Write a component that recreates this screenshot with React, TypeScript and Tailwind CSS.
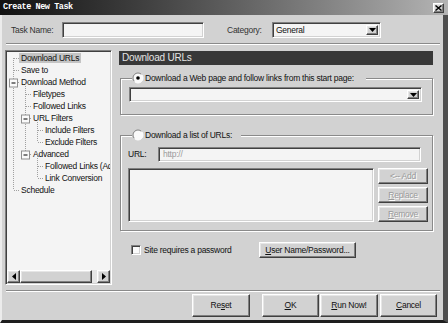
import React from 'react';

const raised =
  'border border-t-white border-l-white border-r-[#404040] border-b-[#404040] shadow-[inset_-1px_-1px_0_#808080,inset_1px_1px_0_#e6e6e6] bg-[#d2d2d2]';
const sunken =
  'border border-t-[#808080] border-l-[#808080] border-r-white border-b-white shadow-[inset_1px_1px_0_#404040,inset_-1px_-1px_0_#d2d2d2]';
const etchedLine = 'h-[2px] border-t border-t-[#8a8a8a] border-b border-b-white';
const groupBox = 'relative border border-[#8a8a8a] shadow-[1px_1px_0_#fff,inset_1px_1px_0_#fff]';

const tree = [
  { t: 'Download URLs', l: 0, sel: true },
  { t: 'Save to', l: 0 },
  { t: 'Download Method', l: 0 },
  { t: 'Filetypes', l: 1 },
  { t: 'Followed Links', l: 1 },
  { t: 'URL Filters', l: 1 },
  { t: 'Include Filters', l: 2 },
  { t: 'Exclude Filters', l: 2 },
  { t: 'Advanced', l: 1 },
  { t: 'Followed Links (Advanced)', l: 2 },
  { t: 'Link Conversion', l: 2 },
  { t: 'Schedule', l: 0 },
];
const indent = ['pl-[12px]', 'pl-[24px]', 'pl-[36px]'];

function DownArrow() {
  return (
    <div className={`${raised} flex h-full w-[12px] items-center justify-center`}>
      <svg width="7" height="4" viewBox="0 0 7 4">
        <polygon points="0,0 7,0 3.5,4" fill="#000" />
      </svg>
    </div>
  );
}

function Radio({ checked }: { checked?: boolean }) {
  return (
    <svg width="12" height="12" viewBox="0 0 12 12" className="shrink-0">
      <circle cx="6" cy="6" r="5" fill="#fafafa" />
      <path d="M2.46 9.54 A5 5 0 0 1 9.54 2.46" stroke="#808080" fill="none" />
      <path d="M9.54 2.46 A5 5 0 0 1 2.46 9.54" stroke="#ffffff" fill="none" />
      {checked && <circle cx="6" cy="6" r="1.8" fill="#000" />}
    </svg>
  );
}

function Btn({ children, className, disabled }: { children: React.ReactNode; className: string; disabled?: boolean }) {
  return (
    <div
      className={`${raised} ${className} flex items-center justify-center ${
        disabled ? 'text-[#9a9a9a] [text-shadow:1px_1px_0_#fff]' : 'text-[#111]'
      }`}
    >
      {children}
    </div>
  );
}

function TreeLines() {
  const c = (i: number) => 6 + 12 * i;
  const h = (x: number, i: number) => <line key={`h${x}-${i}`} x1={x} y1={c(i) + 0.5} x2={x + 6} y2={c(i) + 0.5} />;
  const box = (x: number, i: number) => (
    <g key={`b${x}-${i}`}>
      <rect x={x - 3.5} y={c(i) - 3} width="8" height="8" fill="#fafafa" stroke="#909090" />
      <line x1={x - 1.5} y1={c(i) + 1} x2={x + 2.5} y2={c(i) + 1} stroke="#000" />
    </g>
  );
  return (
    <svg className="pointer-events-none absolute left-0 top-0" width="110" height="150">
      <g stroke="#a0a0a0" strokeDasharray="1 1" fill="none">
        <line x1="6.5" y1={c(0)} x2="6.5" y2={c(11)} />
        <line x1="18.5" y1={c(2)} x2="18.5" y2={c(8)} />
        <line x1="30.5" y1={c(5)} x2="30.5" y2={c(7)} />
        <line x1="30.5" y1={c(8)} x2="30.5" y2={c(10)} />
        {[0, 1, 2, 11].map((i) => h(7, i))}
        {[3, 4, 5, 8].map((i) => h(19, i))}
        {[6, 7, 9, 10].map((i) => h(31, i))}
      </g>
      {box(6, 2)}
      {box(18, 5)}
      {box(18, 8)}
    </svg>
  );
}

function Arrow({ dir }: { dir: 'l' | 'r' }) {
  return (
    <div className={`${raised} flex h-full w-[13px] shrink-0 items-center justify-center`}>
      <svg width="4" height="7" viewBox="0 0 4 7">
        <polygon points={dir === 'l' ? '4,0 4,7 0,3.5' : '0,0 0,7 4,3.5'} fill="#000" />
      </svg>
    </div>
  );
}

export default function App() {
  return (
    <div className="flex h-[323px] w-[448px] flex-col bg-[#d2d2d2] font-['Liberation_Sans',Arial,sans-serif] text-[8.5px] tracking-[-0.25px] text-[#111]">
      {/* title bar */}
      <div className="flex h-[15px] shrink-0 items-center bg-linear-to-r from-[#121212] to-[#b4b4b4] pl-[3px]">
        <span className="font-['Liberation_Mono',monospace] text-[8.5px] font-bold tracking-[-0.45px] text-white">
          Create New Task
        </span>
        <div className={`${raised} ml-auto mr-[4px] flex h-[10px] w-[11px] items-center justify-center`}>
          <svg width="7" height="6" viewBox="0 0 7 6">
            <path d="M0.5 0.5 L6.5 5.5 M6.5 0.5 L0.5 5.5" stroke="#000" strokeWidth="1.4" />
          </svg>
        </div>
      </div>

      <div className="flex flex-1 flex-col border-b-[3px] border-l-[2px] border-r-[5px] border-b-[#1e1e1e] border-l-[#ececec] border-r-[#4e4e4e]">
        {/* task name row */}
        <div className="mt-[7px] flex h-[16px] items-center">
          <span className="ml-[9px] w-[51px] text-[#333]">Task Name:</span>
          <div className={`${sunken} h-full w-[142px] bg-[#f4f4f4]`} />
          <span className="ml-[23px] w-[45px] text-[#333]">Category:</span>
          <div className={`${sunken} flex h-full w-[109px] items-center bg-[#f4f4f4] p-[2px] pl-[3px]`}>
            <span className="flex-1">General</span>
            <DownArrow />
          </div>
        </div>

        <div className={`${etchedLine} ml-[4px] mt-[5px] w-[434px]`} />

        {/* main area */}
        <div className="mt-[5px] flex h-[235px]">
          <div className={`${sunken} ml-[3px] flex w-[107px] flex-col bg-[#f4f4f4] p-[1px]`}>
            <div className="relative flex-1 overflow-hidden">
              <TreeLines />
              {tree.map((r) => (
                <div key={r.t} className={`h-[12px] whitespace-nowrap leading-[12px] ${indent[r.l]}`}>
                  <span className={`px-[2px] ${r.sel ? 'bg-[#c4c4c4]' : ''}`}>{r.t}</span>
                </div>
              ))}
            </div>
            <div className="flex h-[13px] shrink-0">
              <Arrow dir="l" />
              <div className={`${raised} h-full w-[72px]`} />
              <div className="h-full flex-1 bg-[#e6e6e6]" />
              <Arrow dir="r" />
            </div>
          </div>

          {/* right panel */}
          <div className="ml-[7px] flex w-[314px] flex-col">
            <div className="mt-[1px] h-[14px] bg-[#383838] pl-[3px] text-[10px] leading-[14px] tracking-[-0.2px] text-[#e4e4e4]">
              Download URLs
            </div>

            <div className={`${groupBox} ml-[1px] mt-[13px] w-[313px] pb-[12px] pt-[8px]`}>
              <div className="absolute -top-[7px] left-[11px] flex items-center gap-[1px] bg-[#d2d2d2] pr-[12px]">
                <Radio checked />
                <span>Download a Web page and follow links from this start page:</span>
              </div>
              <div className={`${sunken} ml-[8px] flex h-[15px] w-[293px] bg-[#f4f4f4] p-[2px]`}>
                <div className="flex-1" />
                <DownArrow />
              </div>
            </div>

            <div className={`${groupBox} ml-[1px] mt-[20px] w-[313px] pb-[8px] pt-[11px]`}>
              <div className="absolute -top-[7px] left-[11px] flex items-center gap-[1px] bg-[#d2d2d2] pr-[9px]">
                <Radio />
                <span>Download a list of URLs:</span>
              </div>
              <div className="flex h-[15px] items-center">
                <span className="ml-[7px] w-[30px]">URL:</span>
                <div className={`${sunken} flex h-full w-[263px] items-center bg-[#f4f4f4] pl-[4px] text-[#9a9a9a]`}>
                  http://
                </div>
              </div>
              <div className="mt-[6px] flex">
                <div className={`${sunken} ml-[7px] h-[54px] w-[246px] bg-[#f4f4f4]`} />
                <div className="ml-[4px] flex w-[50px] flex-col gap-[3px]">
                  <Btn className="h-[16px]" disabled>
                    &lt;-- Add
                  </Btn>
                  <Btn className="h-[16px]" disabled>
                    <span>
                      <u>R</u>eplace
                    </span>
                  </Btn>
                  <Btn className="h-[16px]" disabled>
                    <span>
                      <u>R</u>emove
                    </span>
                  </Btn>
                </div>
              </div>
            </div>

            <div className="mt-[11px] flex h-[16px] items-center">
              <div className={`${sunken} ml-[12px] h-[10px] w-[10px] bg-[#fafafa]`} />
              <span className="ml-[3px] w-[115px]">Site requires a password</span>
              <Btn className="h-full w-[97px]">
                <span>
                  <u>U</u>ser Name/Password...
                </span>
              </Btn>
            </div>
          </div>
        </div>

        <div className={`${etchedLine} ml-[4px] mt-[5px] w-[434px]`} />

        {/* bottom buttons */}
        <div className="mt-[2px] flex h-[23px]">
          <Btn className="ml-[190px] w-[58px]">
            <span>
              Re<u>s</u>et
            </span>
          </Btn>
          <Btn className="ml-[12px] w-[57px]">
            <span>
              <u>O</u>K
            </span>
          </Btn>
          <Btn className="ml-[1px] w-[58px]">
            <span>
              <u>R</u>un Now!
            </span>
          </Btn>
          <Btn className="ml-[2px] w-[57px]">
            <span>
              <u>C</u>ancel
            </span>
          </Btn>
        </div>
      </div>
    </div>
  );
}
